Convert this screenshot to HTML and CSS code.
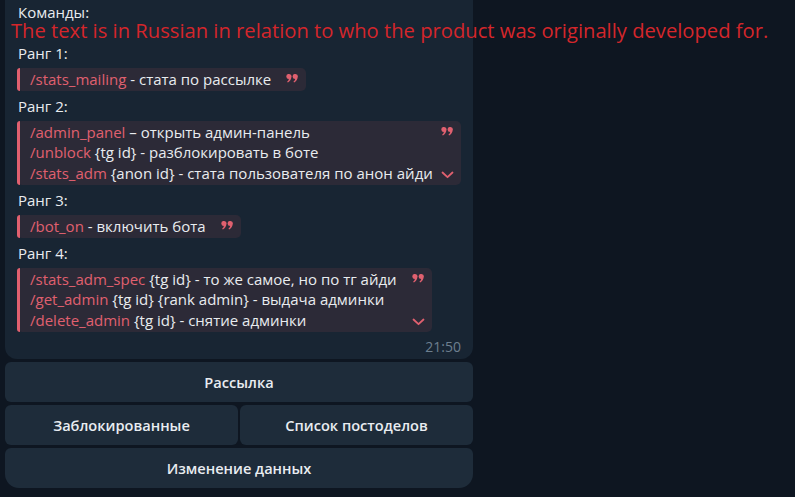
FILE: index.html
```html
<!DOCTYPE html>
<html lang="ru">
<head>
<meta charset="utf-8">
<title>Команды</title>
<link rel="stylesheet" href="styles.css">
</head>
<body>
<div class="chat">
  <div class="message">
    <div class="bubble">
      <div class="label">Команды:</div>
      <div class="label blank">&nbsp;</div>
      <div class="label">Ранг 1:</div>
      <div class="quote">
        <div class="line"><span class="cmd">/stats_mailing</span> - стата по рассылке</div>
        <svg class="qmark" viewBox="0 0 12 9" width="12" height="9"><g fill="#e0606f"><path id="q" d="M0.3 2.7a2.6 2.6 0 1 1 5.1 0.6c-0.2 2.2-1.5 4.1-3.5 5.3l-0.8-0.9c1-0.8 1.6-1.6 1.8-2.6A2.6 2.6 0 0 1 0.3 2.7z"/><use href="#q" x="6.3"/></g></svg>
      </div>
      <div class="label">Ранг 2:</div>
      <div class="quote">
        <div class="line"><span class="cmd">/admin_panel</span> – открыть админ-панель</div>
        <div class="line"><span class="cmd">/unblock</span> {tg id} - разблокировать в боте</div>
        <div class="line"><span class="cmd">/stats_adm</span> {anon id} - стата пользователя по анон айди</div>
        <svg class="qmark" viewBox="0 0 12 9" width="12" height="9"><g fill="#e0606f"><use href="#q"/><use href="#q" x="6.3"/></g></svg>
        <svg class="chev" viewBox="0 0 13 8" width="13" height="8"><path d="M1.5 1.5 L6.5 6.2 L11.5 1.5" fill="none" stroke="#e0606f" stroke-width="1.8" stroke-linecap="round" stroke-linejoin="round"/></svg>
      </div>
      <div class="label">Ранг 3:</div>
      <div class="quote">
        <div class="line"><span class="cmd">/bot_on</span> - включить бота</div>
        <svg class="qmark" viewBox="0 0 12 9" width="12" height="9"><g fill="#e0606f"><use href="#q"/><use href="#q" x="6.3"/></g></svg>
      </div>
      <div class="label">Ранг 4:</div>
      <div class="quote">
        <div class="line"><span class="cmd">/stats_adm_spec</span> {tg id} - то же самое, но по тг айди</div>
        <div class="line"><span class="cmd">/get_admin</span> {tg id} {rank admin} - выдача админки</div>
        <div class="line"><span class="cmd">/delete_admin</span> {tg id} - снятие админки</div>
        <svg class="qmark" viewBox="0 0 12 9" width="12" height="9"><g fill="#e0606f"><use href="#q"/><use href="#q" x="6.3"/></g></svg>
        <svg class="chev" viewBox="0 0 13 8" width="13" height="8"><path d="M1.5 1.5 L6.5 6.2 L11.5 1.5" fill="none" stroke="#e0606f" stroke-width="1.8" stroke-linecap="round" stroke-linejoin="round"/></svg>
      </div>
      <div class="time">21:50</div>
    </div>
    <div class="keyboard">
      <button class="key wide">Рассылка</button>
      <button class="key">Заблокированные</button>
      <button class="key">Список постоделов</button>
      <button class="key wide last">Изменение данных</button>
    </div>
  </div>
  <div class="overlay">The text is in Russian in relation to who the product was originally developed for.</div>
</div>
</body>
</html>
```
FILE: styles.css
```css
* { box-sizing: border-box; }
html, body {
  margin: 0;
  padding: 0;
  background: #0e1621;
}
body {
  width: 795px;
  height: 497px;
  overflow: hidden;
  font-family: "Open Sans", "Noto Sans", sans-serif;
  font-size: 15px;
  color: #e9ecef;
}
.chat {
  position: relative;
  height: 497px;
  padding: 0 0 0 5px;
}
.message {
  width: 468px;
  display: flex;
  flex-direction: column;
  gap: 3px;
}
.bubble {
  background: #182533;
  border-radius: 0 0 12px 12px;
  padding: 2px 12px 2px 12px;
  display: flex;
  flex-direction: column;
  align-items: flex-start;
  line-height: 20.5px;
}
.label {
  padding-left: 1px;
  margin-top: 5px;
}
.label:first-child { margin-top: 0; }
.label.blank { margin-top: 0; }
.label.blank + .label { margin-top: 0; }
.quote {
  position: relative;
  margin-top: 4px;
  background: #2c2a37;
  border-radius: 5px;
  padding: 1px 35px 2px 13px;
  max-width: 100%;
  white-space: nowrap;
}
.quote::before {
  content: "";
  position: absolute;
  left: 0;
  top: 0;
  bottom: 0;
  width: 3px;
  background: #e0606f;
  border-radius: 5px 0 0 5px;
}
.cmd { color: #e0606f; }
.qmark {
  position: absolute;
  right: 8px;
  top: 6px;
}
.chev {
  position: absolute;
  right: 7px;
  bottom: 6px;
}
.time {
  align-self: flex-end;
  color: #6d7f8f;
  font-size: 14px;
  margin-top: 5px;
  line-height: 20px;
}
.keyboard {
  display: grid;
  grid-template-columns: 1fr 1fr;
  gap: 3px 2px;
}
.key {
  height: 40px;
  border: 0;
  background: #1e2c3a;
  color: #e9edf1;
  font-family: "Open Sans", "Noto Sans", sans-serif;
  font-weight: 600;
  font-size: 14.6px;
  border-radius: 6px;
  padding: 0;
}
.key.wide { grid-column: 1 / 3; }
.key.last { border-radius: 6px 6px 14px 14px; }
.overlay {
  position: absolute;
  left: 11px;
  top: 16px;
  color: #d4262b;
  font-family: "Open Sans", "Noto Sans", sans-serif;
  font-size: 20.2px;
  line-height: 28px;
  white-space: nowrap;
}
```
